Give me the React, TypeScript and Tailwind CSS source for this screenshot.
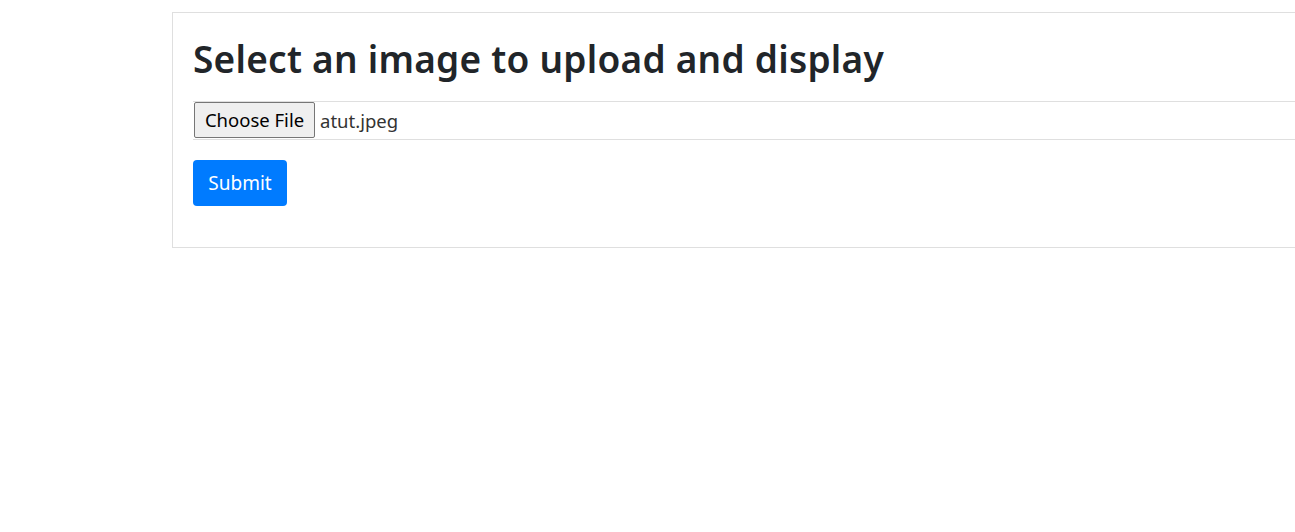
import React from "react";

export default function App() {
  return (
    <div className="w-full min-h-screen overflow-hidden bg-white font-['Noto_Sans',sans-serif] text-[#212529]">
      <div className="pt-[12px] pl-[172px]">
        <div className="w-[1200px] border border-[#dfdfdf] px-[20px] pt-[22px] pb-[41px]">
          <h1 className="text-[37px] font-semibold leading-[48px] tracking-[0.25px]">
            Select an image to upload and display
          </h1>

          <div className="mt-[18px] flex h-[39px] items-start border-y border-[#dfdfdf]">
            <button
              type="button"
              className="ml-[1px] h-[36px] w-[121px] rounded-[2px] border border-[#767676] bg-[#efefef] text-[18.5px] leading-none text-black"
            >
              Choose File
            </button>
            <span className="ml-[5px] self-center text-[18.5px] text-[#333]">atut.jpeg</span>
          </div>

          <button
            type="submit"
            className="mt-[20px] h-[46px] w-[94px] rounded-[4px] bg-[#007bff] text-[19px] text-white"
          >
            Submit
          </button>
        </div>
      </div>
    </div>
  );
}
